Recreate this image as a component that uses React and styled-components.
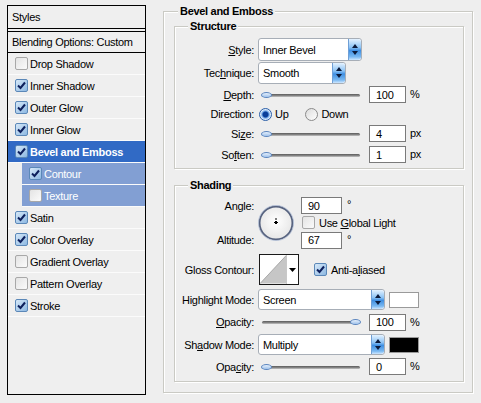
import React from 'react';
import styled, { createGlobalStyle } from 'styled-components';

const Global = createGlobalStyle`
  html, body { margin: 0; padding: 0; background: #eeeeee; }
  body { font-family: "Liberation Sans", Arial, sans-serif; font-size: 11px; letter-spacing: -0.3px; color: #000; }
`;

const Page = styled.div`
  display: flex;
  align-items: flex-start;
  width: 481px;
  height: 403px;
  overflow: hidden;
  background: #eeeeee;
`;

/* ---------- left styles list ---------- */
const StylesPanel = styled.div`
  margin: 5px 0 0 7px;
  width: 139px;
  height: 390px;
  box-sizing: border-box;
  border: 1px solid #000;
  background: #efefef;
  display: flex;
  flex-direction: column;
`;

const PanelHeader = styled.div`
  height: 23px;
  box-sizing: border-box;
  border-bottom: 1px solid #000;
  padding-left: 4px;
  display: flex;
  align-items: center;
  margin-bottom: 2px;
`;

const BlendRow = styled.div`
  height: 22px;
  box-sizing: border-box;
  border-top: 1px solid #000;
  border-bottom: 1px solid #000;
  padding-left: 4px;
  display: flex;
  align-items: center;
`;

const Item = styled.div`
  height: 22px;
  box-sizing: border-box;
  border-bottom: 1px solid #fbfbfb;
  margin-left: ${p => (p.$sub ? 14 : 0)}px;
  padding-left: 7px;
  display: flex;
  align-items: center;
  gap: 2px;
  background: ${p => (p.$selected ? '#316ac5' : p.$sub ? '#829fd3' : 'transparent')};
  color: ${p => (p.$selected || p.$sub ? '#fff' : '#000')};
  font-weight: ${p => (p.$selected ? 'bold' : 'normal')};
`;

const BoxCheck = styled.span`
  width: 13px;
  height: 13px;
  box-sizing: border-box;
  flex: none;
  display: inline-flex;
  align-items: center;
  justify-content: center;
  border: 1px solid ${p => (p.$on ? '#5b88b8' : '#a8a8a8')};
  border-radius: 2px;
  background: ${p =>
    p.$on ? 'linear-gradient(135deg, #d6e8f8, #8db8e2)' : 'linear-gradient(135deg, #e4e4e4, #fbfbfb)'};
`;

const Check = ({ on }) => (
  <BoxCheck $on={on}>
    {on && (
      <svg width="9" height="9" viewBox="0 0 9 9">
        <path d="M1 4.5 L3.5 7 L8 1.5" fill="none" stroke="#0d1f5c" strokeWidth="2" />
      </svg>
    )}
  </BoxCheck>
);

/* ---------- right panel ---------- */
const Group = styled.div`
  position: relative;
  box-sizing: border-box;
  border: 1px solid #cacac4;
  box-shadow: inset 1px 1px 0 #fff, 1px 1px 0 #fff;
`;

const OuterGroup = styled(Group)`
  margin: 11px 0 0 17px;
  width: 310px;
  height: 382px;
  padding: 14px 8px 0 10px;
`;

const InnerGroup = styled(Group)`
  width: 290px;
  height: ${p => p.$h}px;
  padding-top: 11px;
  margin-bottom: ${p => p.$mb || 0}px;
`;

const Legend = styled.span`
  position: absolute;
  top: -8px;
  left: ${p => p.$left}px;
  padding: 0 2px;
  background: #eeeeee;
  font-weight: bold;
  line-height: 14px;
`;

const Row = styled.div`
  display: grid;
  grid-template-columns: 83px auto;
  align-items: center;
  height: ${p => p.$h}px;
  margin-top: ${p => p.$mt || 0}px;
`;

const Label = styled.label`
  text-align: right;
  padding-right: 4px;
  white-space: nowrap;
`;

const Controls = styled.div`
  display: flex;
  align-items: center;
  grid-column: ${p => p.$col || 'auto'};
`;

const U = styled.span`
  text-decoration: underline;
`;

const SelectBox = styled.div`
  width: ${p => p.$w}px;
  height: ${p => p.$h}px;
  box-sizing: border-box;
  border: 1px solid #a7aeb7;
  border-radius: 3px;
  background: #fff;
  display: flex;
  align-items: stretch;
  justify-content: space-between;
`;

const SelectText = styled.span`
  display: flex;
  align-items: center;
  padding-left: 4px;
`;

const Spinner = styled.span`
  width: 12px;
  display: flex;
  align-items: center;
  justify-content: center;
  border-left: 1px solid #6f9fd6;
  border-radius: 0 3px 3px 0;
  background: linear-gradient(#e4f2ff 0%, #8cc3f5 40%, #3f8fe2 55%, #7ab9f2 85%, #cfe7ff 100%);
`;

const Select = ({ w, h, children }) => (
  <SelectBox $w={w} $h={h}>
    <SelectText>{children}</SelectText>
    <Spinner>
      <svg width="6" height="11" viewBox="0 0 6 11">
        <path d="M3 0 L6 4 L0 4 Z M0 7 L6 7 L3 11 Z" fill="#0b1a3a" />
      </svg>
    </Spinner>
  </SelectBox>
);

const SliderBox = styled.div`
  position: relative;
  width: 104px;
  height: 10px;
  margin-right: 7px;
`;

const Track = styled.div`
  position: absolute;
  left: 4px;
  right: 2px;
  top: 4px;
  height: 3px;
  border-radius: 2px;
  background: linear-gradient(#5a5a5a, #8a8a8a 60%, #c8c8c8);
`;

const Thumb = styled.div`
  position: absolute;
  top: 2px;
  width: 11px;
  height: 6px;
  border-radius: 50%;
  border: 1px solid #5c86bf;
  box-sizing: border-box;
  background: linear-gradient(#e8f2fd, #9fc1ea);
`;

const Slider = ({ pos }) => (
  <SliderBox>
    <Track />
    <Thumb style={{ left: pos }} />
  </SliderBox>
);

const NumBox = styled.div`
  width: ${p => p.$w || 37}px;
  height: 17px;
  box-sizing: border-box;
  border: 1px solid #7a7a7a;
  background: #fff;
  padding-left: 6px;
  display: flex;
  align-items: center;
`;

const Unit = styled.span`
  margin-left: ${p => p.$ml || 4}px;
  align-self: flex-start;
  margin-top: ${p => (p.$mt == null ? 2 : p.$mt)}px;
`;

const RadioDot = styled.span`
  width: 13px;
  height: 13px;
  box-sizing: border-box;
  border-radius: 50%;
  border: 1px solid ${p => (p.$on ? '#2a5ea8' : '#8a8a8a')};
  background: ${p => (p.$on ? 'radial-gradient(circle, #0a3f9a 0 2.5px, #6fa6e6 3.5px, #dcebfb 5px)' : 'linear-gradient(135deg, #dcdcdc, #fff)')};
  margin-right: 3px;
  flex: none;
`;

const RadioLabel = styled.span`
  margin-right: ${p => p.$mr || 0}px;
`;

const ShadeGrid = styled.div`
  display: grid;
  grid-template-columns: 83px 43px auto;
  grid-template-rows: 17px 17px 18px;
  align-items: center;
`;

const Dial = styled.div`
  grid-column: 2;
  grid-row: 1 / 4;
  width: 36px;
  height: 36px;
  align-self: center;
`;

const Pad = styled.span`
  margin-left: ${p => p.$ml || 0}px;
  display: inline-flex;
  align-items: center;
  gap: ${p => p.$gap || 0}px;
`;

const ContourPreview = styled.div`
  width: 40px;
  height: 31px;
  box-sizing: border-box;
  border: 1px solid #1a1a1a;
  background: #fff;
  margin-left: 1px;
  display: flex;
`;

const ContourArrow = styled.div`
  width: 11px;
  border-left: 1px solid #c8c8c8;
  display: flex;
  align-items: center;
  justify-content: center;
`;

const Swatch = styled.div`
  width: 30px;
  height: 16px;
  box-sizing: border-box;
  margin-left: 4px;
  border: 1px solid #9a9a9a;
  background: ${p => p.$c};
`;

const items = [
  { name: 'Drop Shadow', on: false },
  { name: 'Inner Shadow', on: true },
  { name: 'Outer Glow', on: true },
  { name: 'Inner Glow', on: true },
  { name: 'Bevel and Emboss', on: true, selected: true },
  { name: 'Contour', on: true, sub: true },
  { name: 'Texture', on: false, sub: true },
  { name: 'Satin', on: true },
  { name: 'Color Overlay', on: true },
  { name: 'Gradient Overlay', on: false },
  { name: 'Pattern Overlay', on: false },
  { name: 'Stroke', on: true },
];

export default function App() {
  return (
    <Page>
      <Global />
      <StylesPanel>
        <PanelHeader>Styles</PanelHeader>
        <BlendRow>Blending Options: Custom</BlendRow>
        {items.map(it => (
          <Item key={it.name} $sub={it.sub} $selected={it.selected}>
            <Check on={it.on} />
            <span>{it.name}</span>
          </Item>
        ))}
      </StylesPanel>

      <OuterGroup>
        <Legend $left={14}>Bevel and Emboss</Legend>

        <InnerGroup $h={143} $mb={16}>
          <Legend $left={13}>Structure</Legend>
          <Row $h={23}>
            <Label><U>S</U>tyle:</Label>
            <Controls><Select w={104} h={23}>Inner Bevel</Select></Controls>
          </Row>
          <Row $h={23}>
            <Label>Tec<U>h</U>nique:</Label>
            <Controls><Select w={88} h={22}>Smooth</Select></Controls>
          </Row>
          <Row $h={21}>
            <Label><U>D</U>epth:</Label>
            <Controls>
              <Slider pos={3} />
              <NumBox>100</NumBox>
              <Unit>%</Unit>
            </Controls>
          </Row>
          <Row $h={18}>
            <Label>Direction:</Label>
            <Controls>
              <Pad $ml={1}>
                <RadioDot $on />
                <RadioLabel $mr={17}>Up</RadioLabel>
                <RadioDot />
                <RadioLabel>Down</RadioLabel>
              </Pad>
            </Controls>
          </Row>
          <Row $h={21}>
            <Label>Si<U>z</U>e:</Label>
            <Controls>
              <Slider pos={3} />
              <NumBox>4</NumBox>
              <Unit>px</Unit>
            </Controls>
          </Row>
          <Row $h={21}>
            <Label>So<U>f</U>ten:</Label>
            <Controls>
              <Slider pos={3} />
              <NumBox>1</NumBox>
              <Unit>px</Unit>
            </Controls>
          </Row>
        </InnerGroup>

        <InnerGroup $h={197}>
          <Legend $left={13}>Shading</Legend>
          <ShadeGrid>
            <Label>An<U>g</U>le:</Label>
            <Dial>
              <svg width="36" height="36" viewBox="0 0 36 36">
                <defs>
                  <radialGradient id="dg" cx="50%" cy="45%" r="55%">
                    <stop offset="0%" stopColor="#ffffff" />
                    <stop offset="100%" stopColor="#e6e6e6" />
                  </radialGradient>
                </defs>
                <circle cx="18" cy="18" r="16.5" fill="url(#dg)" stroke="#56627e" strokeWidth="2" />
                <circle cx="18" cy="18" r="17.6" fill="none" stroke="#b8c4da" strokeWidth="0.8" />
                <rect x="17" y="16" width="2" height="3" fill="#000" />
                <rect x="16" y="17" width="4" height="1" fill="#000" />
                <rect x="17.5" y="13" width="1" height="2" fill="#000" />
              </svg>
            </Dial>
            <Controls>
              <NumBox $w={41}>90</NumBox>
              <Unit $ml={5} $mt={1}>°</Unit>
            </Controls>

            <Controls $col={3}>
              <Pad $ml={1} $gap={4}>
                <Check on={false} />
                <span>Use <U>G</U>lobal Light</span>
              </Pad>
            </Controls>

            <Label>Altitude:</Label>
            <Controls $col={3}>
              <NumBox $w={41}>67</NumBox>
              <Unit $ml={5} $mt={1}>°</Unit>
            </Controls>
          </ShadeGrid>

          <Row $h={31} $mt={5}>
            <Label>Gloss Contour:</Label>
            <Controls>
              <ContourPreview>
                <svg width="27" height="29" viewBox="0 0 27 29">
                  <polygon points="0,29 27,0 27,29" fill="#c6c6c6" />
                  <line x1="0" y1="29" x2="27" y2="0" stroke="#a8a8a8" strokeWidth="1" />
                </svg>
                <ContourArrow>
                  <svg width="7" height="4" viewBox="0 0 7 4">
                    <path d="M0 0 L7 0 L3.5 4 Z" fill="#000" />
                  </svg>
                </ContourArrow>
              </ContourPreview>
              <Pad $ml={15} $gap={4}>
                <Check on />
                <span>Anti-a<U>l</U>iased</span>
              </Pad>
            </Controls>
          </Row>

          <Row $h={23} $mt={3}>
            <Label>Hi<U>g</U>hlight Mode:</Label>
            <Controls>
              <Select w={127} h={21}>Screen</Select>
              <Swatch $c="#ffffff" />
            </Controls>
          </Row>
          <Row $h={22}>
            <Label><U>O</U>pacity:</Label>
            <Controls>
              <Slider pos={92} />
              <NumBox>100</NumBox>
              <Unit>%</Unit>
            </Controls>
          </Row>
          <Row $h={23}>
            <Label>Sh<U>a</U>dow Mode:</Label>
            <Controls>
              <Select w={127} h={21}>Multiply</Select>
              <Swatch $c="#000000" />
            </Controls>
          </Row>
          <Row $h={21}>
            <Label>Opa<U>c</U>ity:</Label>
            <Controls>
              <Slider pos={3} />
              <NumBox>0</NumBox>
              <Unit>%</Unit>
            </Controls>
          </Row>
        </InnerGroup>
      </OuterGroup>
    </Page>
  );
}
